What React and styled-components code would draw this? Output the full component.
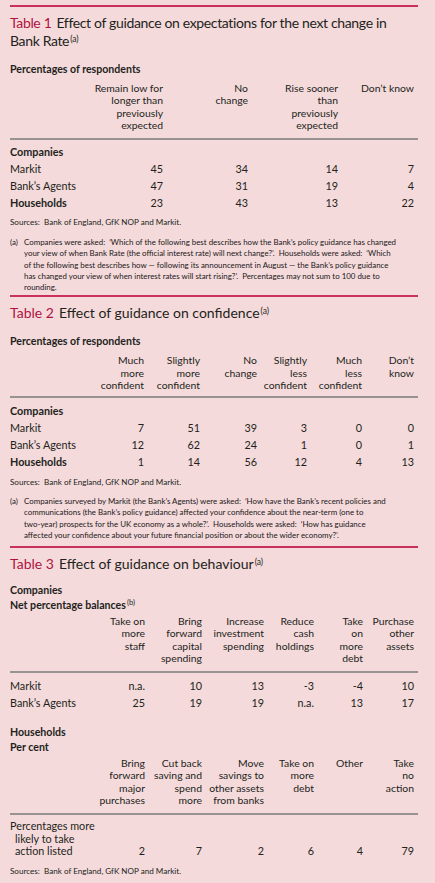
import React from "react";
import styled, { createGlobalStyle } from "styled-components";

const GlobalStyle = createGlobalStyle`
  html, body { margin: 0; padding: 0; background: #f4dadb; }
  body { font-family: Lato, "Open Sans", sans-serif; color: #231f20; }
`;

const Page = styled.div`
  width: 435px;
  min-height: 883px;
  box-sizing: border-box;
  padding: 5px 17px 0 10px;
  background: #f4dadb;
`;

const Section = styled.section`
  border-top: 2px solid #c9305a;
`;

const Title = styled.h2`
  margin: 7px 0 0;
  font-weight: 400;
  font-size: 14px;
  line-height: 18px;
  letter-spacing: ${(p) => (p.$tight ? "-0.35px" : "0")};
  white-space: ${(p) => (p.$tight ? "nowrap" : "normal")};
  color: #231f20;
`;

const TableNo = styled.span`
  color: #b0123f;
  margin-right: 5px;
`;

const Sup = styled.sup`
  font-size: ${(p) => (p.$small ? 7.5 : 8.5)}px;
  font-weight: 400;
  line-height: 0;
  letter-spacing: 0;
  vertical-align: 4px;
  margin-left: 1px;
`;

const SubHead = styled.div`
  margin-top: ${(p) => p.$mt || 0}px;
  font-weight: 700;
  font-size: 10.6px;
  line-height: 15px;
`;

const Grid = styled.div`
  display: grid;
  grid-template-columns: ${(p) => p.$cols};
  padding-right: 4px;
`;

const HeadGrid = styled(Grid)`
  margin-top: ${(p) => p.$mt}px;
  padding-bottom: ${(p) => p.$pb}px;
  border-bottom: 2px solid #979393;
  font-size: 10.4px;
  line-height: 12.3px;
`;

const HeadCell = styled.div`
  text-align: right;
`;

const Body = styled.div`
  padding-top: ${(p) => p.$pt}px;
`;

const Row = styled(Grid)`
  font-size: 10.8px;
  line-height: 17px;
  align-items: last baseline;
`;

const Label = styled.div`
  font-weight: ${(p) => (p.$bold ? 700 : 400)};
  grid-column: ${(p) => (p.$full ? "1 / -1" : "auto")};
  white-space: nowrap;
`;

const MultiLabel = styled.div`
  line-height: 12.5px;
  padding-left: 5px;
  text-indent: -5px;
  white-space: nowrap;
`;

const Value = styled.div`
  text-align: right;
`;

const Sources = styled.div`
  margin-top: ${(p) => p.$mt}px;
  font-size: 8.1px;
  line-height: 11px;
`;

const Note = styled.div`
  display: flex;
  margin-top: ${(p) => p.$mt}px;
  margin-bottom: ${(p) => p.$mb}px;
  font-size: 7.9px;
  line-height: 11.2px;
  color: #1c1819;
`;

const NoteMark = styled.span`
  flex: 0 0 14px;
`;

const NoteText = styled.span`
  flex: 1;
`;

const multi = (s) =>
  s.split("|").map((t, i, a) => (
    <React.Fragment key={i}>
      {t}
      {i < a.length - 1 && <br />}
    </React.Fragment>
  ));

const COLS1 = "83px 70px 85px 90px 76px";
const COLS2 = "80px 54px 56px 57px 50px 55px 52px";
const COLS3 = "80px 55px 57px 62px 50px 49px 51px";

function DataRows({ cols, rows }) {
  return rows.map(([label, bold, ...vals]) => (
    <Row key={label} $cols={cols}>
      <Label $bold={bold}>{label}</Label>
      {vals.map((v, i) => (
        <Value key={i}>{v}</Value>
      ))}
    </Row>
  ));
}

function Head({ cols, items, mt, pb }) {
  return (
    <HeadGrid $cols={cols} $mt={mt} $pb={pb}>
      <div />
      {items.map((h) => (
        <HeadCell key={h}>{multi(h)}</HeadCell>
      ))}
    </HeadGrid>
  );
}

export default function App() {
  const h1 = ["Remain low for|longer than|previously|expected", "No|change", "Rise sooner|than|previously|expected", "Don’t know"];
  const h2 = ["Much|more|confident", "Slightly|more|confident", "No|change", "Slightly|less|confident", "Much|less|confident", "Don’t|know"];
  const h3a = ["Take on|more|staff", "Bring|forward|capital|spending", "Increase|investment|spending", "Reduce|cash|holdings", "Take|on|more|debt", "Purchase|other|assets"];
  const h3b = ["Bring|forward|major|purchases", "Cut back|saving and|spend|more", "Move|savings to|other assets|from banks", "Take on|more|debt", "Other", "Take|no|action"];

  return (
    <Page>
      <GlobalStyle />
      <Section>
        <Title $tight>
          <TableNo>Table 1</TableNo>Effect of guidance on expectations for the next change in
          <br />
          Bank Rate<Sup>(a)</Sup>
        </Title>
        <SubHead $mt={12}>Percentages of respondents</SubHead>
        <Head cols={COLS1} items={h1} mt={5} pb={7} />
        <Body $pt={3}>
          <Row $cols={COLS1}>
            <Label $bold $full>Companies</Label>
          </Row>
          <DataRows
            cols={COLS1}
            rows={[
              ["Markit", false, 45, 34, 14, 7],
              ["Bank’s Agents", false, 47, 31, 19, 4],
              ["Households", true, 23, 43, 13, 22],
            ]}
          />
        </Body>
        <Sources $mt={6}>Sources:&nbsp; Bank of England, GfK NOP and Markit.</Sources>
        <Note $mt={9} $mb={2}>
          <NoteMark>(a)</NoteMark>
          <NoteText>
            Companies were asked:&nbsp; ‘Which of the following best describes how the Bank’s policy guidance has changed
            <br />
            your view of when Bank Rate (the official interest rate) will next change?’.&nbsp; Households were asked:&nbsp; ‘Which
            <br />
            of the following best describes how — following its announcement in August — the Bank’s policy guidance
            <br />
            has changed your view of when interest rates will start rising?’.&nbsp; Percentages may not sum to 100 due to
            <br />
            rounding.
          </NoteText>
        </Note>
      </Section>

      <Section>
        <Title>
          <TableNo>Table 2</TableNo>Effect of guidance on confidence<Sup>(a)</Sup>
        </Title>
        <SubHead $mt={12}>Percentages of respondents</SubHead>
        <Head cols={COLS2} items={h2} mt={5} pb={5} />
        <Body $pt={4}>
          <Row $cols={COLS2}>
            <Label $bold $full>Companies</Label>
          </Row>
          <DataRows
            cols={COLS2}
            rows={[
              ["Markit", false, 7, 51, 39, 3, 0, 0],
              ["Bank’s Agents", false, 12, 62, 24, 1, 0, 1],
              ["Households", true, 1, 14, 56, 12, 4, 13],
            ]}
          />
        </Body>
        <Sources $mt={7}>Sources:&nbsp; Bank of England, GfK NOP and Markit.</Sources>
        <Note $mt={8} $mb={5}>
          <NoteMark>(a)</NoteMark>
          <NoteText>
            Companies surveyed by Markit (the Bank’s Agents) were asked:&nbsp; ‘How have the Bank’s recent policies and
            <br />
            communications (the Bank’s policy guidance) affected your confidence about the near-term (one to
            <br />
            two-year) prospects for the UK economy as a whole?’.&nbsp; Households were asked:&nbsp; ‘How has guidance
            <br />
            affected your confidence about your future financial position or about the wider economy?’.
          </NoteText>
        </Note>
      </Section>

      <Section>
        <Title>
          <TableNo>Table 3</TableNo>Effect of guidance on behaviour<Sup>(a)</Sup>
        </Title>
        <SubHead $mt={10}>Companies</SubHead>
        <SubHead>
          Net percentage balances<Sup $small>(b)</Sup>
        </SubHead>
        <Head cols={COLS3} items={h3a} mt={2} pb={7} />
        <Body $pt={4}>
          <DataRows
            cols={COLS3}
            rows={[
              ["Markit", false, "n.a.", 10, 13, -3, -4, 10],
              ["Bank’s Agents", false, 25, 19, 19, "n.a.", 13, 17],
            ]}
          />
        </Body>
        <SubHead $mt={14}>Households</SubHead>
        <SubHead>Per cent</SubHead>
        <Head cols={COLS3} items={h3b} mt={2} pb={7} />
        <Body $pt={5}>
          <Row $cols={COLS3}>
            <MultiLabel>
              Percentages more
              <br />
              likely to take
              <br />
              action listed
            </MultiLabel>
            {[2, 7, 2, 6, 4, 79].map((v, i) => (
              <Value key={i}>{v}</Value>
            ))}
          </Row>
        </Body>
        <Sources $mt={7}>Sources:&nbsp; Bank of England, GfK NOP and Markit.</Sources>
      </Section>
    </Page>
  );
}
